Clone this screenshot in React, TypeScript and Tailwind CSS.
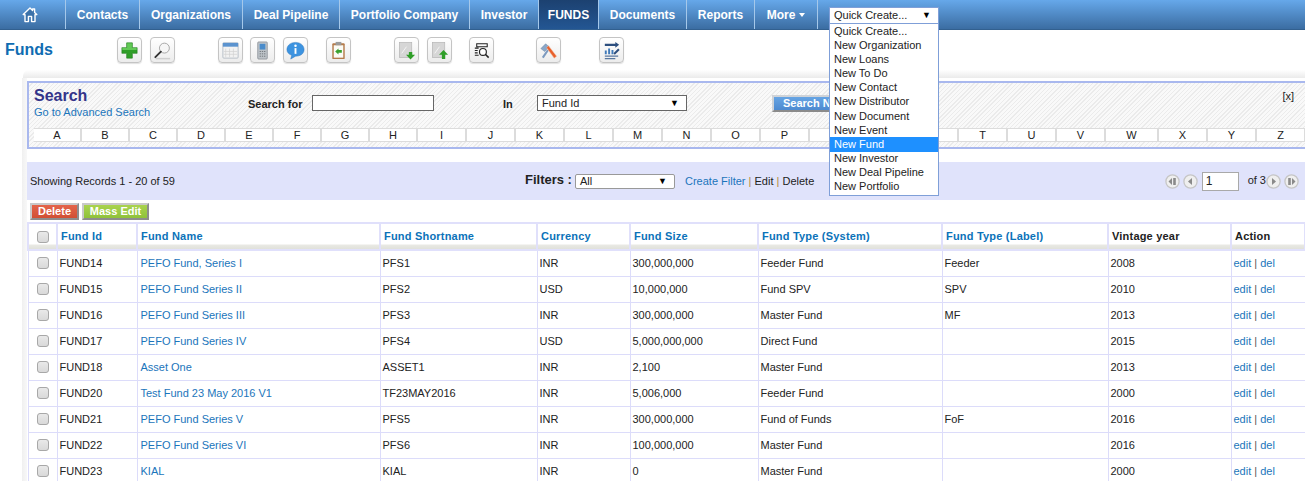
import { ReactNode } from 'react';

const navItems = [
  { label: 'Contacts', w: 'w-[74px]' },
  { label: 'Organizations', w: 'w-[103px]' },
  { label: 'Deal Pipeline', w: 'w-[97px]' },
  { label: 'Portfolio Company', w: 'w-[130px]' },
  { label: 'Investor', w: 'w-[69px]' },
  { label: 'FUNDS', w: 'w-[60px]', active: true },
  { label: 'Documents', w: 'w-[88px]' },
  { label: 'Reports', w: 'w-[68px]' },
];

const quickCreate = ['Quick Create...', 'New Organization', 'New Loans', 'New To Do', 'New Contact', 'New Distributor', 'New Document', 'New Event', 'New Fund', 'New Investor', 'New Deal Pipeline', 'New Portfolio'];

const letters = 'ABCDEFGHIJKLMNOPQRSTUVWXYZ'.split('');

const funds = [
  ['FUND14', 'PEFO Fund, Series I', 'PFS1', 'INR', '300,000,000', 'Feeder Fund', 'Feeder', '2008'],
  ['FUND15', 'PEFO Fund Series II', 'PFS2', 'USD', '10,000,000', 'Fund SPV', 'SPV', '2010'],
  ['FUND16', 'PEFO Fund Series III', 'PFS3', 'INR', '300,000,000', 'Master Fund', 'MF', '2013'],
  ['FUND17', 'PEFO Fund Series IV', 'PFS4', 'USD', '5,000,000,000', 'Direct Fund', '', '2015'],
  ['FUND18', 'Asset One', 'ASSET1', 'INR', '2,100', 'Master Fund', '', '2013'],
  ['FUND20', 'Test Fund 23 May 2016 V1', 'TF23MAY2016', 'INR', '5,006,000', 'Feeder Fund', '', '2000'],
  ['FUND21', 'PEFO Fund Series V', 'PFS5', 'INR', '300,000,000', 'Fund of Funds', 'FoF', '2016'],
  ['FUND22', 'PEFO Fund Series VI', 'PFS6', 'INR', '100,000,000', 'Master Fund', '', '2016'],
  ['FUND23', 'KIAL', 'KIAL', 'INR', '0', 'Master Fund', '', '2000'],
];

const headers = [
  { label: 'Fund Id', w: 'w-[80px]' },
  { label: 'Fund Name', w: 'w-[243px]' },
  { label: 'Fund Shortname', w: 'w-[157px]' },
  { label: 'Currency', w: 'w-[93px]' },
  { label: 'Fund Size', w: 'w-[128px]' },
  { label: 'Fund Type (System)', w: 'w-[184px]' },
  { label: 'Fund Type (Label)', w: 'w-[166px]' },
  { label: 'Vintage year', w: 'w-[123px]', plain: true },
  { label: 'Action', w: 'w-[74px]', plain: true },
];

function ToolButton({ className, children }: { className: string; children: ReactNode }) {
  return (
    <div className={`w-[25px] h-[26px] shrink-0 rounded-[4px] border border-[#c4c4c4] bg-gradient-to-b from-white to-[#ececec] flex items-center justify-center shadow-[0_1px_1px_rgba(0,0,0,0.12)] ${className}`}>
      <svg width="21" height="21" viewBox="0 0 22 22">{children}</svg>
    </div>
  );
}

function FakeSelect({ label, className }: { label: string; className: string }) {
  return (
    <div className={`flex items-center justify-between bg-white pl-[4px] pr-[7px] text-[11px] leading-none text-[#222] ${className}`}>
      <span>{label}</span>
      <span className="text-[9px] text-black">▼</span>
    </div>
  );
}

function PagerButton({ dir, end }: { dir: 'left' | 'right'; end?: boolean }) {
  let mark = <polygon points={dir === 'left' ? '9,4 5,7.5 9,11' : '6,4 10,7.5 6,11'} fill="#8a8a8a" />;
  if (end) {
    mark = dir === 'left' ? (
      <>
        <polygon points="7,4 3.5,7.5 7,11" fill="#8a8a8a" />
        <rect x="8.2" y="4" width="2.6" height="7" fill="#8a8a8a" />
      </>
    ) : (
      <>
        <rect x="4.2" y="4" width="2.6" height="7" fill="#8a8a8a" />
        <polygon points="8,4 11.5,7.5 8,11" fill="#8a8a8a" />
      </>
    );
  }
  return (
    <svg width="15" height="15" viewBox="0 0 15 15" className="shrink-0">
      <circle cx="7.5" cy="7.5" r="6.6" fill="#efefef" stroke="#c6c6c6" strokeWidth="1.3" />
      {mark}
    </svg>
  );
}

function Checkbox() {
  return <div className="w-[12px] h-[12px] mx-auto rounded-[3px] border border-[#a8a8a8] bg-gradient-to-b from-[#e9e9e9] to-[#d9d9d9]" />;
}

export default function App() {
  return (
    <div className="relative w-[1305px] h-[481px] overflow-hidden bg-white text-[11px] text-[#222] font-['Liberation_Sans',Arial,sans-serif]">
      {/* top nav */}
      <div className="flex h-[30px] bg-gradient-to-b from-[#66a8ea] to-[#3b6da2] border-b border-[#32608f]">
        <div className="w-[66px] flex items-center justify-center pr-[6px] border-r border-[#a5c8ea]">
          <svg width="16" height="17" viewBox="0 0 16 17" className="mb-[1px]">
            <path d="M1.2 8.6 L8 2 L10.6 4.5 V3 H12.6 V6.4 L14.8 8.6 H13 V15.6 H9.6 V10.4 H6.4 V15.6 H3 V8.6 Z" fill="#3d73aa" stroke="white" strokeWidth="1.4" strokeLinejoin="round" />
          </svg>
        </div>
        {navItems.map((item) => (
          <div key={item.label} className={`${item.w} flex items-center justify-center border-r border-[#a5c8ea] font-bold text-[12px] text-white ${item.active ? 'bg-gradient-to-b from-[#1c4170] to-[#235693]' : ''}`}>
            {item.label}
          </div>
        ))}
        <div className="w-[63px] flex items-center justify-center gap-[4px] border-r border-[#a5c8ea] font-bold text-[12px] text-white">
          More
          <span className="w-0 h-0 border-x-[3.5px] border-x-transparent border-t-[4px] border-t-white" />
        </div>
        <div className="ml-[11px] mt-[7px]">
          <FakeSelect label="Quick Create..." className="w-[110px] h-[17px] border border-[#7f9fd8]" />
        </div>
      </div>

      {/* quick create menu */}
      <div className="absolute left-[829px] top-[23px] w-[110px] h-[173px] bg-white border border-[#7f9fd8] z-10">
        {quickCreate.map((q) => (
          <div key={q} className={`h-[14.18px] flex items-center pl-[4px] text-[11px] leading-none ${q === 'New Fund' ? 'bg-[#1e90ff] text-white' : 'text-[#222]'}`}>
            {q}
          </div>
        ))}
      </div>

      {/* page title and toolbar */}
      <div className="flex items-center h-[40px]">
        <div className="ml-[5px] mt-[-1px] w-[112px] text-[16px] font-bold text-[#0f6cb2]">Funds</div>
        <ToolButton className="">
          <path d="M8 3 H14 V8 H19 V14 H14 V19 H8 V14 H3 V8 H8 Z" fill="#2f9e28" stroke="#1f7d1c" strokeWidth="0.6" />
          <path d="M8.5 3.5 H13.5 V8.5 H18.5 V10.5 H3.5 V8.5 H8.5 Z" fill="#62c956" />
        </ToolButton>
        <ToolButton className="ml-[8px]">
          <circle cx="13" cy="8.5" r="5.2" fill="#f6f6f6" stroke="#a5a5a5" strokeWidth="1" />
          <path d="M9.3 12.2 L3.5 18" stroke="#333" strokeWidth="2" strokeLinecap="round" />
          <path d="M4 19.5 H19" stroke="#cfcfcf" strokeWidth="1.5" />
        </ToolButton>
        <ToolButton className="ml-[43px]">
          <rect x="3" y="3" width="16" height="16" rx="1" fill="#f2f2f2" stroke="#a9b3bd" strokeWidth="0.8" />
          <rect x="3" y="3" width="16" height="4" fill="#5b93cf" />
          <path d="M6 9 V18 M10 9 V18 M14 9 V18 M4 12 H18 M4 15 H18" stroke="#cfcfcf" strokeWidth="0.7" />
        </ToolButton>
        <ToolButton className="ml-[7px]">
          <rect x="6" y="2" width="10" height="18" rx="1" fill="#bdc3c8" stroke="#7c8388" strokeWidth="0.7" />
          <rect x="8" y="4" width="6" height="6" fill="#4a8ccb" />
          <path d="M8 12 H14 M8 14.5 H14 M8 17 H14" stroke="#70767b" strokeWidth="1" strokeDasharray="1.4 0.9" />
        </ToolButton>
        <ToolButton className="ml-[8px]">
          <path d="M11 2.5 C16 2.5 20 5.6 20 10 C20 14.4 16 17 11 17 L6 20 L7 16 C4 15 2 13 2 10 C2 5.6 6 2.5 11 2.5 Z" fill="#3c93e0" stroke="#2b74bb" strokeWidth="0.5" />
          <circle cx="11" cy="6" r="1.3" fill="white" />
          <rect x="10" y="8.5" width="2" height="6" fill="white" />
        </ToolButton>
        <ToolButton className="ml-[18px]">
          <rect x="4.5" y="3.5" width="13" height="16.5" rx="1" fill="#b47b4a" />
          <rect x="6" y="5.5" width="10" height="13" fill="#fbfbf5" />
          <rect x="8" y="2" width="6" height="3.5" fill="#9b9b9b" />
          <path d="M7.5 12 L11 8.8 V10.6 H14.5 V13.4 H11 V15.2 Z" fill="#3aa12f" />
        </ToolButton>
        <ToolButton className="ml-[43px]">
          <rect x="3.5" y="2.5" width="13" height="16" fill="#d6d6d6" stroke="#b4b4b4" strokeWidth="0.7" />
          <path d="M6 14 L11 7" stroke="#f4f4f4" strokeWidth="1" />
          <path d="M13.5 12.5 H17 V15.5 H20 L15.2 20.5 L10.5 15.5 H13.5 Z" fill="#2f9e28" />
        </ToolButton>
        <ToolButton className="ml-[8px]">
          <rect x="3.5" y="2.5" width="13" height="16" fill="#d6d6d6" stroke="#b4b4b4" strokeWidth="0.7" />
          <path d="M6 14 L11 7" stroke="#f4f4f4" strokeWidth="1" />
          <path d="M15.2 10.5 L20 15.5 H17 V20 H13.5 V15.5 H10.5 Z" fill="#2f9e28" />
        </ToolButton>
        <ToolButton className="ml-[17px]">
          <path d="M6 4 H17 V7 H6 Z M4 8.5 H8 M4 11 H7 M4 13.5 H7 M4 16 H8" fill="none" stroke="#222" strokeWidth="1.1" />
          <circle cx="12.5" cy="12.5" r="3.6" fill="white" stroke="#222" strokeWidth="1.2" />
          <path d="M15 15 L18.5 18.5" stroke="#222" strokeWidth="1.6" />
        </ToolButton>
        <ToolButton className="ml-[42px]">
          <path d="M3 9 L8 4 L11.5 7 L7 12 Z" fill="#8aa7c9" stroke="#64809f" strokeWidth="0.5" />
          <path d="M5 18.5 L10.5 10.5" stroke="#7c9abf" strokeWidth="2.2" />
          <path d="M9 8 L11 6 L19.5 17 L17 19 Z" fill="#e8602c" stroke="#f4c4a8" strokeWidth="0.5" />
        </ToolButton>
        <ToolButton className="ml-[38px]">
          <path d="M4 4 H15 L15 2 L19 5 L15 8 L15 6.2 H4 Z" fill="#2c4e7e" />
          <path d="M4 15 V11 H6 V15 Z M7.5 15 V9 H9.5 V15 Z M11 15 V10.5 H13 V15 Z" fill="#3f79b8" />
          <path d="M13 14 L18 9 L19.5 10.5 L14.5 15.5 Z" fill="#2c4e7e" />
          <path d="M4 17 H18 M4 19.5 H15" stroke="#58779f" strokeWidth="1.3" />
        </ToolButton>
      </div>

      {/* content panel */}
      <div className="ml-[23px] h-[8px] rounded-tl-[6px] bg-gradient-to-b from-white to-[#ebebeb]" />
      <div className="ml-[22px] pl-[5px] pt-[3px] h-[403px] bg-[linear-gradient(90deg,#f0f0f0,#f8f8f8_5px,#fff_5px)]">
        {/* search */}
        <div className="h-[68px] border-y-2 border-l-2 border-[#a9b8ee] bg-[repeating-linear-gradient(135deg,#f9f9f9_0px,#f9f9f9_2px,#ebebeb_2px,#ebebeb_3px)] px-[5px]">
          <div className="relative flex h-[45px]">
            <div className="w-[214px] pt-[4px]">
              <div className="text-[16px] leading-[18px] font-bold text-[#34348a]">Search</div>
              <div className="text-[11px] leading-[14px] text-[#1b75bb]">Go to Advanced Search</div>
            </div>
            <div className="pt-[13px] w-[64px] font-bold">Search for</div>
            <div className="mt-[12px] w-[122px] h-[16px] bg-white border border-[#666]" />
            <div className="pt-[13px] ml-[69px] w-[34px] font-bold">In</div>
            <FakeSelect label="Fund Id" className="mt-[12px] w-[150px] h-[16px] border border-[#666]" />
            <div className="mt-[12px] ml-[85px] w-[80px] h-[17px] bg-gradient-to-b from-[#66a4e4] to-[#4d8ad0] border-l-2 border-t-2 border-[#cfd3d8] border-b-2 border-b-[#8b8b8b] flex items-center pl-[9px] font-bold text-white">Search Now</div>
            <div className="absolute right-[6px] top-[5px] text-[#222]">[x]</div>
          </div>
          <div className="grid grid-cols-[48px_48px_48px_48px_48px_48px_48px_48px_49px_49px_49px_49px_49px_49px_49px_49px_49px_49px_51px_49px_49px_49px_53px_49px_49px_49px] mr-[-5px] h-[14px] bg-white">
            {letters.map((l) => (
              <div key={l} className="flex items-center justify-center border-r-2 border-y border-[#dcdcdc] text-[11px] leading-none text-[#222]">{l}</div>
            ))}
          </div>
        </div>

        {/* filters */}
        <div className="mt-[13px] flex items-center h-[38px] bg-[#e0e3fb] pl-[3px]">
          <div className="w-[495px]">Showing Records 1 - 20 of 59</div>
          <div className="w-[50px] mt-[-2px] text-[13px] font-bold text-[#222] whitespace-nowrap">Filters :</div>
          <FakeSelect label="All" className="w-[100px] h-[15px] border border-[#999] rounded-[2px]" />
          <div className="ml-[10px] whitespace-nowrap">
            <span className="text-[#1b75bb]">Create Filter</span> <span className="text-[#b58a3a]">|</span> Edit <span className="text-[#b58a3a]">|</span> Delete
          </div>
          <div className="ml-auto mr-[6px] flex items-center">
            <PagerButton dir="left" end />
            <div className="ml-[3px]"><PagerButton dir="left" /></div>
            <div className="ml-[4px] w-[37px] h-[19px] bg-white border border-[#a9a9a9] pl-[3px] leading-[17px] text-[12px]">1</div>
            <div className="ml-[9px] mt-[-2px] text-[11px]">of 3</div>
            <PagerButton dir="right" />
            <div className="ml-[3px]"><PagerButton dir="right" end /></div>
          </div>
        </div>

        {/* mass actions */}
        <div className="flex gap-[3px] pl-[3px] pt-[3px] h-[22px]">
          <div className="w-[49px] h-[17px] bg-gradient-to-b from-[#e4654a] to-[#d14f34] border-2 border-t-[#c9c9c9] border-l-[#c9c9c9] border-r-[#8d8d8d] border-b-[#8d8d8d] flex items-center justify-center font-bold text-white">Delete</div>
          <div className="w-[67px] h-[17px] bg-gradient-to-b from-[#a9d34e] to-[#8fc23a] border-2 border-t-[#c9c9c9] border-l-[#c9c9c9] border-r-[#8d8d8d] border-b-[#8d8d8d] flex items-center justify-center font-bold text-white">Mass Edit</div>
        </div>

        {/* table */}
        <table className="table-fixed border-collapse w-[1277px]">
          <thead>
            <tr className="h-[27px]">
              <th className="w-[29px] border-2 border-[#e0e0fb] bg-[linear-gradient(#fff_0,#fff_20px,#e9e9e4_21px,#dedfd8_26px)] font-normal"><Checkbox /></th>
              {headers.map((h) => (
                <th key={h.label} className={`${h.w} border-2 border-[#e0e0fb] bg-[linear-gradient(#fff_0,#fff_20px,#e9e9e4_21px,#dedfd8_26px)] text-left pl-[3px] pb-[1px] font-bold tracking-[0.2px] ${h.plain ? 'text-[#222]' : 'text-[#0b72b9]'}`}>
                  {h.label}
                </th>
              ))}
            </tr>
          </thead>
          <tbody>
            {funds.map((row) => (
              <tr key={row[0]} className="h-[26px]">
                <td className="border border-[#dcdcfa]"><Checkbox /></td>
                {row.map((cell, i) => (
                  <td key={i} className={`border border-[#dcdcfa] whitespace-nowrap ${i === 1 ? 'pl-[3px] text-[#1b75bb]' : 'pl-[2px]'}`}>{cell}</td>
                ))}
                <td className="border border-[#dcdcfa] pl-[2px] whitespace-nowrap text-[#1b75bb]">edit <span className="text-[#555]">|</span> del</td>
              </tr>
            ))}
          </tbody>
        </table>
      </div>
    </div>
  );
}
